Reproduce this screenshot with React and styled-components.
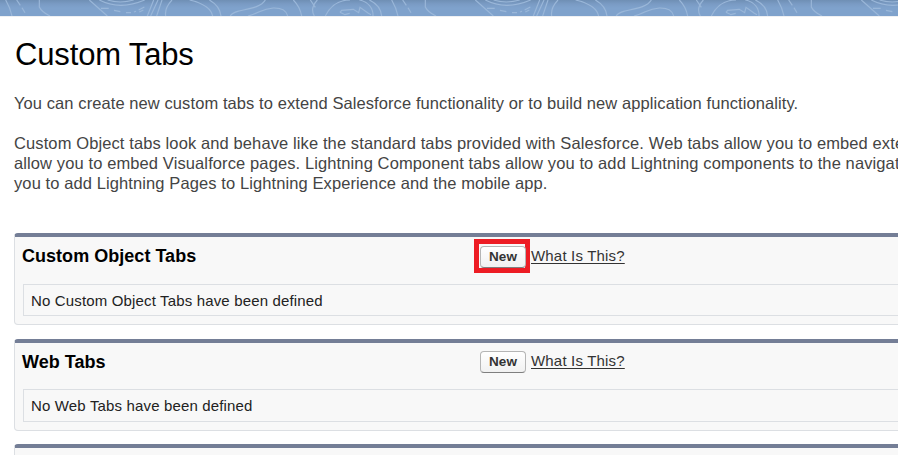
import React from "react";
import styled, { createGlobalStyle } from "styled-components";

const GlobalStyle = createGlobalStyle`
  html, body { margin: 0; height: 455px; overflow: hidden; background: #fff; }
  * { box-sizing: border-box; }
`;

const Page = styled.main`
  width: 898px;
  height: 455px;
  overflow: hidden;
  background: #fff;
  color: #000;
  font-family: "Liberation Sans", Arial, sans-serif;
`;

const Banner = styled.header`
  height: 16px;
  background: linear-gradient(#6f8fb4 0, #7a9bc4 4px, #7fa2cc 8px, #7fa2cc 100%);
`;

const Contours = styled.svg`
  display: block;
  width: 898px;
  height: 16px;
  fill: none;
  stroke: #9ab7d9;
  stroke-width: 3.4;
`;

const Content = styled.div`
  width: 1500px;
  padding-left: 14px;
  border-top: 1px solid #eef0f3;
`;

const Title = styled.h1`
  margin: 0 0 0 1px;
  padding-top: 20px;
  height: 76px;
  font-size: 31px;
  line-height: 36px;
  font-weight: 400;
  letter-spacing: -0.15px;
  white-space: nowrap;
`;

const Intro = styled.p`
  margin: 0 0 20px;
  color: #444;
  font-size: 16.5px;
  line-height: 20px;
  letter-spacing: 0.085px;
  white-space: nowrap;
`;

const Line = styled.span`
  display: block;
  letter-spacing: ${(p) => p.$spacing || 0}px;
`;

const Panels = styled.div`
  padding-top: 20px;
`;

const Panel = styled.section`
  height: 92px;
  margin-bottom: ${(p) => p.$gap || 0}px;
  padding-left: 7px;
  border: 1px solid #dcdfe3;
  border-top: 4px solid #747e96;
  border-radius: 4px;
  background: #f8f8f8;
  font-size: 15px;
`;

const PanelHead = styled.div`
  display: flex;
  align-items: flex-start;
  height: ${(p) => p.$height}px;
`;

const PanelTitle = styled.h2`
  flex: 0 0 452px;
  margin: 0;
  padding-top: 8px;
  font-size: 18px;
  line-height: 22px;
  font-weight: 700;
  letter-spacing: 0.03px;
`;

const Highlight = styled.div`
  width: 56px;
  height: 34px;
  margin-top: ${(p) => p.$top}px;
  padding: 7px 5px 0 6px;
  ${(p) => p.$on && "box-shadow: inset 0 0 0 5px #ed1c24;"}
`;

const NewButton = styled.button`
  display: block;
  width: 46px;
  height: 22px;
  padding: 0;
  border: 1px solid #b5b5b5;
  border-bottom-color: #7f7f7f;
  border-radius: 4px;
  background: linear-gradient(#fff, #f1f1f1);
  color: #333;
  font: 700 13.5px/20px "Liberation Sans", Arial, sans-serif;
  letter-spacing: 0.1px;
`;

const HelpLink = styled.a`
  margin: ${(p) => p.$top}px 0 0 1px;
  color: #333;
  font-size: 15px;
  line-height: 18px;
  letter-spacing: 0.18px;
  text-decoration: underline;
  text-underline-offset: 2px;
  white-space: nowrap;
`;

const EmptyRow = styled.div`
  height: ${(p) => p.$height}px;
  margin-left: 1px;
  padding-left: 7px;
  border: 1px solid #dcdfe3;
  color: #222;
  font-size: 15px;
  line-height: 31px;
  letter-spacing: 0.155px;
`;

function ContourPattern() {
  return (
    <Contours viewBox="0 0 2694 48" aria-hidden="true">
      <defs>
        <pattern id="contours" width="1158" height="48" patternUnits="userSpaceOnUse">
          <path d="M17 0Q31 24 36 48M50 0L61 16M66 23L75 38M118 0V21Q125 36 150 48M268 0L322 48M303 25H326M298 0Q360 32 434 0M323 0Q360 12 401 0M342 31L361 35M378 38L393 38M402 36L408 34M416 30L433 21M418 36L430 30M461 0L442 48M474 0L452 48M486 0L470 48M516 0Q493 24 497 48M569 0Q631 15 638 48M628 0Q660 18 663 48M691 48C700 24 775 35 796 0M744 48C780 40 783 26 820 24Q857 23 863 48M880 0Q900 20 905 48M931 0L946 22M952 0Q929 25 943 48M976 48C990 20 1015 0 1050 0M1078 0C1105 5 1120 25 1119 48M1020 37L1035 44L1049 40M1020 37L1025 31L1060 28L1076 38L1080 22L1105 40L1113 44M1108 0Q1142 16 1145 48" />
        </pattern>
      </defs>
      <rect width="2694" height="48" fill="url(#contours)" stroke="none" />
    </Contours>
  );
}

function TabPanel({ title, empty, gap, headHeight, rowHeight, buttonTop, linkTop, highlighted }) {
  return (
    <Panel $gap={gap}>
      <PanelHead $height={headHeight}>
        <PanelTitle>{title}</PanelTitle>
        <Highlight $on={highlighted} $top={buttonTop}>
          <NewButton>New</NewButton>
        </Highlight>
        <HelpLink $top={linkTop}>What Is This?</HelpLink>
      </PanelHead>
      <EmptyRow $height={rowHeight}>{empty}</EmptyRow>
    </Panel>
  );
}

export default function App() {
  return (
    <Page>
      <GlobalStyle />
      <Banner><ContourPattern /></Banner>
      <Content>
        <Title>Custom Tabs</Title>
        <Intro>You can create new custom tabs to extend Salesforce functionality or to build new application functionality.</Intro>
        <Intro>
          <Line $spacing={0.11}>Custom Object tabs look and behave like the standard tabs provided with Salesforce. Web tabs allow you to embed exte</Line>
          <Line $spacing={0.11}>allow you to embed Visualforce pages. Lightning Component tabs allow you to add Lightning components to the navigat</Line>
          <Line $spacing={0.1}>you to add Lightning Pages to Lightning Experience and the mobile app.</Line>
        </Intro>
        <Panels>
          <TabPanel title="Custom Object Tabs" empty="No Custom Object Tabs have been defined"
            gap={14} headHeight={47} rowHeight={32} buttonTop={2} linkTop={10} highlighted />
          <TabPanel title="Web Tabs" empty="No Web Tabs have been defined"
            gap={13} headHeight={46} rowHeight={33} buttonTop={1} linkTop={9} />
          <Panel />
        </Panels>
      </Content>
    </Page>
  );
}
